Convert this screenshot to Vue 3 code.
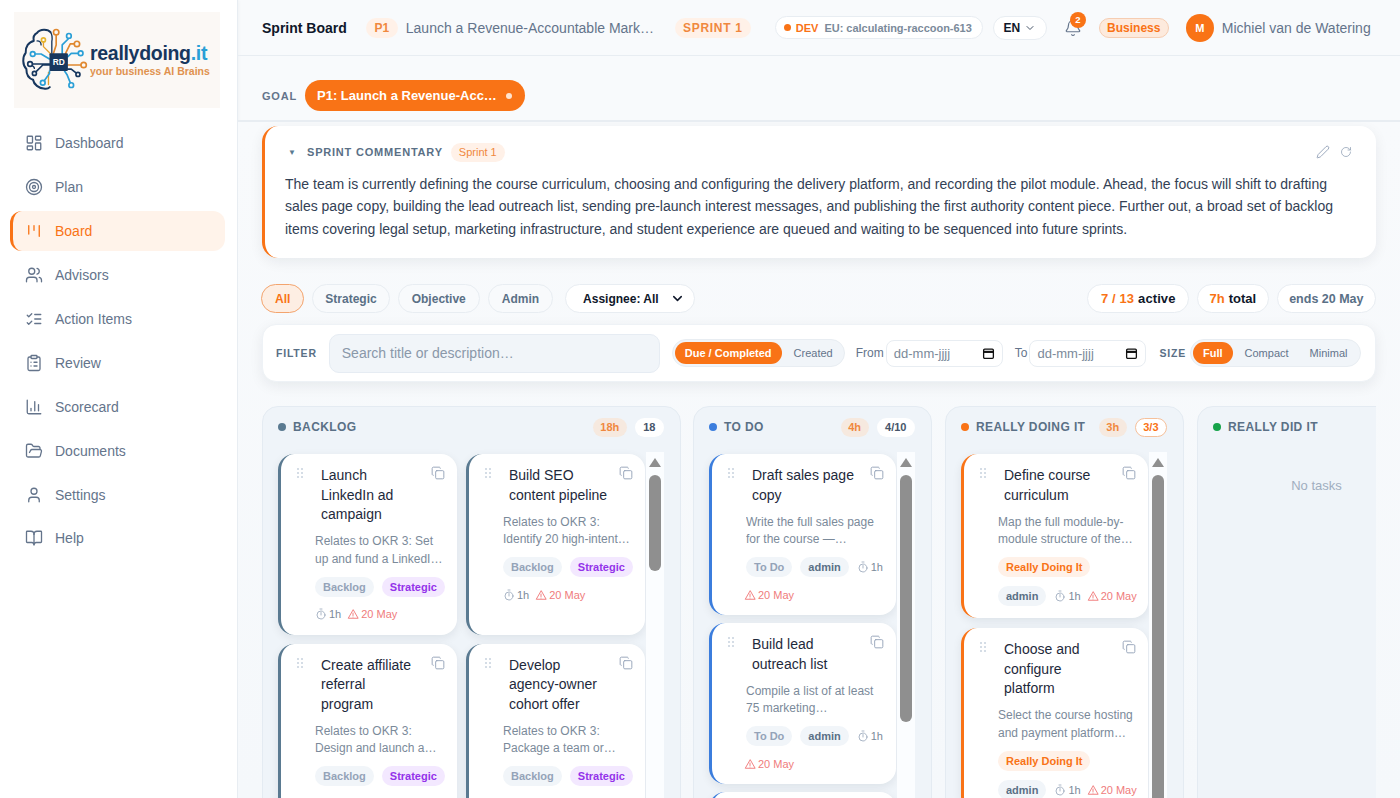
<template>
  <div class="app">
    <aside class="sidebar">
      <div class="logo">
        <svg class="logo__mark" viewBox="60 80 200 190" fill="none" stroke-linecap="round" stroke-linejoin="round">
          <path d="M148 92c-6-8-30-12-40 2-8 4-12 14-10 24-14 2-26 18-24 36-10 12-10 36 2 48 0 14 6 28 20 32 2 14 18 26 32 26 8 2 14 0 18-4" stroke="#17375e" stroke-width="6" />
          <path d="M148 92c6 8 6 16 4 28l0 35M108 118c8 0 12 6 12 12M90 190c6 2 10 6 10 10" stroke="#17375e" stroke-width="4" />
          <path d="M165 100v30l-8 25M227 127h-20l-14 28M247 190h-47" stroke="#e0882f" stroke-width="5" />
          <path d="M127 121v14l22 22M142 212v36" stroke="#e5a02e" stroke-width="4" />
          <path d="M203 110l-20 20v25M238 155h-28l-10 10M125 243l20-28v-7M95 157h25l25 15M210 250l-12-30-8-12" stroke="#2a9fd6" stroke-width="5" />
          <path d="M87 187h58M100 215l25-25h20M230 218l-20-16h-10" stroke="#17375e" stroke-width="5" />
          <g stroke-width="5" fill="#fbf8f5">
            <circle cx="165" cy="92" r="8" stroke="#e0882f" />
            <circle cx="203" cy="103" r="7" stroke="#2a9fd6" />
            <circle cx="227" cy="127" r="8" stroke="#e0882f" />
            <circle cx="238" cy="155" r="7" stroke="#2a9fd6" />
            <circle cx="247" cy="190" r="8" stroke="#e0882f" />
            <circle cx="230" cy="218" r="6" stroke="#17375e" />
            <circle cx="210" cy="250" r="7" stroke="#2a9fd6" />
            <circle cx="125" cy="243" r="7" stroke="#2a9fd6" />
            <circle cx="100" cy="215" r="6" stroke="#17375e" />
            <circle cx="87" cy="187" r="7" stroke="#17375e" />
            <circle cx="95" cy="157" r="7" stroke="#2a9fd6" />
            <circle cx="127" cy="115" r="6" stroke="#e5b32e" />
          </g>
          <rect x="145" y="155" width="55" height="53" rx="3" fill="#17375e" />
          <text x="172.5" y="190" text-anchor="middle" fill="#fff" font-size="25" font-weight="700" font-family="'Liberation Sans', sans-serif">RD</text>
        </svg>
        <div class="logo__text">
          <div class="logo__name">reallydoing<span>.it</span></div>
          <div class="logo__tag">your business AI Brains</div>
        </div>
      </div>

      <nav class="nav">
        <a v-for="item in navItems" :key="item.label" class="nav__item" :class="{ 'nav__item--active': item.active }">
          <svg class="nav__icon" viewBox="0 0 24 24" fill="none" stroke="currentColor" stroke-width="1.75" stroke-linecap="round" stroke-linejoin="round">
            <path v-for="d in item.paths" :key="d" :d="d" />
          </svg>
          <span>{{ item.label }}</span>
        </a>
      </nav>
    </aside>

    <main class="main">
      <header class="topbar">
        <strong class="topbar__title">Sprint Board</strong>
        <span class="tint-chip tint-chip--p">P1</span>
        <span class="topbar__goal">Launch a Revenue-Accountable Mark…</span>
        <span class="tint-chip tint-chip--sprint">SPRINT 1</span>
        <div class="env">
          <i class="env__dot"></i>
          <b>DEV</b>
          <span>EU: calculating-raccoon-613</span>
        </div>
        <div class="lang">
          EN
          <svg viewBox="0 0 24 24" width="12" height="12" fill="none" stroke="#475569" stroke-width="2" stroke-linecap="round" stroke-linejoin="round"><path d="m6 9 6 6 6-6" /></svg>
        </div>
        <div class="bell">
          <svg viewBox="0 0 24 24" width="18" height="18" fill="none" stroke="#64748b" stroke-width="1.6" stroke-linecap="round" stroke-linejoin="round">
            <path d="M10.27 21a2 2 0 0 0 3.46 0" />
            <path d="M3.26 15.33A1 1 0 0 0 4 17h16a1 1 0 0 0 .74-1.67C19.41 13.96 18 12.5 18 8A6 6 0 0 0 6 8c0 4.5-1.41 5.96-2.74 7.33" />
          </svg>
          <span class="bell__count">2</span>
        </div>
        <span class="plan">Business</span>
        <div class="user">
          <span class="user__avatar">M</span>
          <span class="user__name">Michiel van de Watering</span>
        </div>
      </header>

      <div class="goalbar">
        <span class="goalbar__label">GOAL</span>
        <button class="goalbar__pill">
          <span>P1: Launch a Revenue-Acc…</span>
          <i></i>
        </button>
      </div>

      <div class="content">
        <section class="commentary">
          <div class="commentary__head">
            <span class="commentary__caret">▼</span>
            <span class="commentary__title">SPRINT COMMENTARY</span>
            <span class="commentary__chip">Sprint 1</span>
            <div class="commentary__tools">
              <svg viewBox="0 0 24 24" width="14" height="14" fill="none" stroke="#94a3b8" stroke-width="1.6" stroke-linecap="round" stroke-linejoin="round"><path d="M21.174 6.812a1 1 0 0 0-3.986-3.987L3.842 16.174a2 2 0 0 0-.5.83l-1.321 4.352a.5.5 0 0 0 .623.622l4.353-1.32a2 2 0 0 0 .83-.497z" /></svg>
              <svg viewBox="0 0 24 24" width="12" height="12" fill="none" stroke="#94a3b8" stroke-width="1.6" stroke-linecap="round" stroke-linejoin="round"><path d="M21 12a9 9 0 1 1-9-9c2.52 0 4.93 1 6.74 2.74L21 8" /><path d="M21 3v5h-5" /></svg>
            </div>
          </div>
          <p class="commentary__text">The team is currently defining the course curriculum, choosing and configuring the delivery platform, and recording the pilot module. Ahead, the focus will shift to drafting sales page copy, building the lead outreach list, sending pre-launch interest messages, and publishing the first authority content piece. Further out, a broad set of backlog items covering legal setup, marketing infrastructure, and student experience are queued and waiting to be sequenced into future sprints.</p>
        </section>

        <div class="toolbar">
          <span v-for="(tab, i) in tabs" :key="tab" class="tab" :class="{ 'tab--active': i === 0 }">{{ tab }}</span>
          <div class="assignee">
            <span>Assignee: All</span>
            <svg viewBox="0 0 24 24" width="15" height="15" fill="none" stroke="#0f172a" stroke-width="2.4" stroke-linecap="round" stroke-linejoin="round"><path d="m6 9 6 6 6-6" /></svg>
          </div>
          <div class="stats">
            <span class="stat stat--first"><em>7 / 13</em> active</span>
            <span class="stat"><em>7h</em> total</span>
            <span class="stat stat--muted">ends 20 May</span>
          </div>
        </div>

        <div class="filter">
          <span class="filter__label">FILTER</span>
          <div class="filter__search">Search title or description…</div>
          <div class="seg seg--date">
            <span class="seg__on">Due / Completed</span>
            <span class="seg__off">Created</span>
          </div>
          <div class="date-field">
            <label>From</label>
            <div class="date-input">
              <span>dd-mm-jjjj</span>
              <svg viewBox="0 0 24 24" width="13" height="13" fill="none" stroke="#111" stroke-width="2.4"><rect x="3" y="4" width="18" height="17" rx="2" /><path d="M3 9h18" stroke-width="4" /></svg>
            </div>
          </div>
          <div class="date-field date-field--to">
            <label>To</label>
            <div class="date-input">
              <span>dd-mm-jjjj</span>
              <svg viewBox="0 0 24 24" width="13" height="13" fill="none" stroke="#111" stroke-width="2.4"><rect x="3" y="4" width="18" height="17" rx="2" /><path d="M3 9h18" stroke-width="4" /></svg>
            </div>
          </div>
          <span class="filter__label filter__label--size">SIZE</span>
          <div class="seg seg--size">
            <span class="seg__on">Full</span>
            <span class="seg__off">Compact</span>
            <span class="seg__off">Minimal</span>
          </div>
        </div>

        <div class="board">
          <section v-for="col in columns" :key="col.name" class="column" :class="`column--${col.kind}`" :style="{ '--accent': col.color }">
            <div class="column__head">
              <i class="column__dot"></i>
              <span class="column__name">{{ col.name }}</span>
              <span v-if="col.hours" class="column__hours">{{ col.hours }}</span>
              <span v-if="col.count" class="column__count" :class="{ 'column__count--full': col.full }">{{ col.count }}</span>
            </div>

            <p v-if="!col.cards.length" class="column__empty">No tasks</p>

            <div v-else class="column__body">
              <div class="column__cards">
                <article v-for="card in col.cards" :key="card.title" class="card">
                  <span class="card__grip"></span>
                  <svg class="card__copy" viewBox="0 0 24 24" fill="none" stroke="#94a3b8" stroke-width="1.6" stroke-linecap="round" stroke-linejoin="round">
                    <rect x="8" y="8" width="14" height="14" rx="2" />
                    <path d="M4 16c-1.1 0-2-.9-2-2V4c0-1.1.9-2 2-2h10c1.1 0 2 .9 2 2" />
                  </svg>
                  <h4 class="card__title">{{ card.title }}</h4>
                  <p class="card__desc">{{ card.desc }}</p>
                  <div class="card__meta">
                    <span class="chip" :class="`chip--${col.kind}`">{{ col.status }}</span>
                    <span v-if="card.tag === 'Strategic'" class="chip chip--strategic">Strategic</span>
                    <span v-else class="chip chip--admin">admin</span>
                    <span class="info">
                      <svg viewBox="0 0 24 24" width="12" height="12" fill="none" stroke="#94a3b8" stroke-width="1.6" stroke-linecap="round"><circle cx="12" cy="14" r="8" /><path d="M12 14V9M10 2h4" /></svg>
                      1h
                    </span>
                    <span class="info info--late">
                      <svg viewBox="0 0 24 24" width="12" height="12" fill="none" stroke="#ef6b6b" stroke-width="1.7" stroke-linejoin="round" stroke-linecap="round"><path d="M12 4 2.5 20.5h19z" /><path d="M12 10v5M12 18v.01" /></svg>
                      20 May
                    </span>
                  </div>
                </article>
              </div>
              <div class="scroll">
                <span class="scroll__up"></span>
                <span class="scroll__thumb" :style="{ height: col.thumb + 'px' }"></span>
              </div>
            </div>
          </section>
        </div>
      </div>
    </main>
  </div>
</template>

<script setup>
const navItems = [
  { label: 'Dashboard', paths: ['M4 3h5a1 1 0 0 1 1 1v7a1 1 0 0 1-1 1H4a1 1 0 0 1-1-1V4a1 1 0 0 1 1-1z', 'M15 3h5a1 1 0 0 1 1 1v3a1 1 0 0 1-1 1h-5a1 1 0 0 1-1-1V4a1 1 0 0 1 1-1z', 'M15 12h5a1 1 0 0 1 1 1v7a1 1 0 0 1-1 1h-5a1 1 0 0 1-1-1v-7a1 1 0 0 1 1-1z', 'M4 16h5a1 1 0 0 1 1 1v3a1 1 0 0 1-1 1H4a1 1 0 0 1-1-1v-3a1 1 0 0 1 1-1z'] },
  { label: 'Plan', paths: ['M12 2a10 10 0 1 0 0 20 10 10 0 1 0 0-20z', 'M12 6a6 6 0 1 0 0 12 6 6 0 1 0 0-12z', 'M12 10a2 2 0 1 0 0 4 2 2 0 1 0 0-4z'] },
  { label: 'Board', active: true, paths: ['M5 5v11', 'M12 5v6', 'M19 5v14'] },
  { label: 'Advisors', paths: ['M16 21v-2a4 4 0 0 0-4-4H6a4 4 0 0 0-4 4v2', 'M9 3a4 4 0 1 0 0 8 4 4 0 1 0 0-8z', 'M22 21v-2a4 4 0 0 0-3-3.87', 'M16 3.13a4 4 0 0 1 0 7.75'] },
  { label: 'Action Items', paths: ['m3 17 2 2 4-4', 'm3 7 2 2 4-4', 'M13 6h8', 'M13 12h8', 'M13 18h8'] },
  { label: 'Review', paths: ['M9 2h6a1 1 0 0 1 1 1v2a1 1 0 0 1-1 1H9a1 1 0 0 1-1-1V3a1 1 0 0 1 1-1z', 'M16 4h2a2 2 0 0 1 2 2v14a2 2 0 0 1-2 2H6a2 2 0 0 1-2-2V6a2 2 0 0 1 2-2h2', 'M12 11h4', 'M12 16h4', 'M8 11h.01', 'M8 16h.01'] },
  { label: 'Scorecard', paths: ['M3 3v16a2 2 0 0 0 2 2h16', 'M18 17V9', 'M13 17V5', 'M8 17v-3'] },
  { label: 'Documents', paths: ['m6 14 1.5-2.9A2 2 0 0 1 9.24 10H20a2 2 0 0 1 1.94 2.5l-1.54 6a2 2 0 0 1-1.94 1.5H4a2 2 0 0 1-2-2V5a2 2 0 0 1 2-2h3.9a2 2 0 0 1 1.69.9l.81 1.2a2 2 0 0 0 1.67.9H18a2 2 0 0 1 2 2v2'] },
  { label: 'Settings', paths: ['M19 21v-2a4 4 0 0 0-4-4H9a4 4 0 0 0-4 4v2', 'M12 3a4 4 0 1 0 0 8 4 4 0 1 0 0-8z'] },
  { label: 'Help', paths: ['M12 7v14', 'M3 18a1 1 0 0 1-1-1V4a1 1 0 0 1 1-1h5a4 4 0 0 1 4 4 4 4 0 0 1 4-4h5a1 1 0 0 1 1 1v13a1 1 0 0 1-1 1h-6a3 3 0 0 0-3 3 3 3 0 0 0-3-3z'] },
]

const tabs = ['All', 'Strategic', 'Objective', 'Admin']

const columns = [
  {
    name: 'BACKLOG', kind: 'backlog', status: 'Backlog', color: '#5a7a91', hours: '18h', count: '18', thumb: 96,
    cards: [
      { title: 'Launch LinkedIn ad campaign', desc: 'Relates to OKR 3: Set up and fund a LinkedIn ad campaign aimed at agency owners', tag: 'Strategic' },
      { title: 'Build SEO content pipeline', desc: 'Relates to OKR 3: Identify 20 high-intent keywords and plan the content around them', tag: 'Strategic' },
      { title: 'Create affiliate\nreferral\nprogram', desc: 'Relates to OKR 3: Design and launch a referral program for past students', tag: 'Strategic' },
      { title: 'Develop agency-owner cohort offer', desc: 'Relates to OKR 3: Package a team or agency cohort offer for larger buyers', tag: 'Strategic' },
    ],
  },
  {
    name: 'TO DO', kind: 'todo', status: 'To Do', color: '#3b7ddd', hours: '4h', count: '4/10', thumb: 247,
    cards: [
      { title: 'Draft sales page copy', desc: 'Write the full sales page for the course — headline,\u00a0offer,\u00a0and guarantee', tag: 'admin' },
      { title: 'Build lead outreach list', desc: 'Compile a list of at least 75 marketing professionals to contact directly', tag: 'admin' },
      { title: 'Send pre-launch messages', desc: 'Send interest messages to everyone on the lead outreach list', tag: 'admin' },
    ],
  },
  {
    name: 'REALLY DOING IT', kind: 'doing', status: 'Really Doing It', color: '#f97316', hours: '3h', count: '3/3', full: true, thumb: 330,
    cards: [
      { title: 'Define course curriculum', desc: 'Map the full module-by-module structure of the course and its lessons', tag: 'admin' },
      { title: 'Choose and configure platform', desc: 'Select the course hosting and payment platform configuration', tag: 'admin' },
    ],
  },
  { name: 'REALLY DID IT', kind: 'did', status: 'Really Did It', color: '#16a34a', cards: [] },
]
</script>

<style>
html,
body {
  margin: 0;
  height: 100%;
  overflow: hidden;
}
</style>

<style scoped>
* {
  box-sizing: border-box;
}

.app {
  display: flex;
  height: 100vh;
  overflow: hidden;
  background: #f8fafc;
  color: #0f172a;
  font-family: "Liberation Sans", Arial, sans-serif;
}

.sidebar {
  width: 238px;
  flex: none;
  background: #fff;
  border-right: 1px solid #e8edf2;
  box-shadow: 1px 0 3px rgba(15, 23, 42, 0.03);
}

.logo {
  margin: 12px 17px 15.5px 14px;
  height: 96px;
  display: flex;
  align-items: center;
  gap: 2px;
  padding-left: 7px;
  background: #fbf8f5;
}

.logo__mark {
  width: 67px;
  height: 64px;
  flex: none;
}

.logo__name {
  color: #17375e;
  font-size: 19.5px;
  font-weight: 700;
  letter-spacing: -0.3px;
  line-height: 22px;
}

.logo__name span {
  color: #2a9fd6;
}

.logo__tag {
  color: #e0924f;
  font-size: 10.5px;
  font-weight: 700;
  line-height: 14px;
  white-space: nowrap;
}

.nav {
  display: flex;
  flex-direction: column;
  gap: 4px;
  margin: 0 12px 0 10px;
}

.nav__item {
  height: 39.9px;
  display: flex;
  align-items: center;
  gap: 12px;
  padding-left: 12px;
  border-left: 3px solid transparent;
  border-radius: 12px;
  color: #64748b;
  font-size: 14px;
}

.nav__item--active {
  background: #fff3ea;
  border-left-color: #f97316;
  color: #f97316;
}

.nav__icon {
  width: 18px;
  height: 18px;
  flex: none;
}

.main {
  flex: 1;
  min-width: 0;
  display: flex;
  flex-direction: column;
}

.topbar {
  height: 56px;
  flex: none;
  display: flex;
  align-items: center;
  padding: 0 0 0 24px;
  border-bottom: 1px solid #e8edf2;
}

.topbar > * {
  flex: none;
}

.topbar__title {
  font-size: 14px;
  margin-right: 19px;
  white-space: nowrap;
}

.tint-chip {
  height: 20px;
  display: inline-flex;
  align-items: center;
  padding: 0 8px;
  border-radius: 10px;
  background: #fff1e8;
  color: #f0883e;
  font-size: 12px;
  font-weight: 700;
}

.tint-chip--p {
  width: 32px;
  justify-content: center;
  margin-right: 8px;
}

.tint-chip--sprint {
  width: 76px;
  justify-content: center;
  padding: 0;
  letter-spacing: 0.7px;
  margin-right: 24px;
}

.topbar__goal {
  width: 248px;
  margin-right: 21px;
  color: #64748b;
  font-size: 14px;
  white-space: nowrap;
}

.env {
  width: 208px;
  height: 23px;
  display: flex;
  align-items: center;
  padding-left: 8px;
  background: #fff;
  border: 1px solid #e8edf2;
  border-radius: 12px;
  font-size: 11px;
  font-weight: 700;
  margin-right: 10px;
  white-space: nowrap;
}

.env__dot {
  width: 7px;
  height: 7px;
  border-radius: 50%;
  background: #f97316;
  margin-right: 5px;
}

.env b {
  color: #f97316;
  margin-right: 6px;
}

.env span {
  color: #7b8a9a;
  font-size: 11px;
  letter-spacing: -0.02px;
}

.lang {
  width: 54px;
  height: 24px;
  display: flex;
  align-items: center;
  justify-content: center;
  gap: 4px;
  background: #fff;
  border: 1px solid #e8edf2;
  border-radius: 12px;
  font-size: 12px;
  font-weight: 700;
  margin-right: 17px;
}

.bell {
  position: relative;
  width: 18px;
  height: 18px;
  margin-right: 17px;
}

.bell__count {
  position: absolute;
  top: -7px;
  left: 6px;
  width: 16px;
  height: 16px;
  border-radius: 50%;
  background: #f97316;
  color: #fff;
  font-size: 9.5px;
  font-weight: 700;
  line-height: 16px;
  text-align: center;
}

.plan {
  width: 70px;
  height: 20px;
  display: flex;
  align-items: center;
  justify-content: center;
  background: #fdeadd;
  border: 1px solid #f6cdb2;
  border-radius: 10px;
  color: #f97316;
  font-size: 12px;
  font-weight: 700;
  margin-right: 17px;
}

.user {
  display: flex;
  align-items: center;
  gap: 8px;
  white-space: nowrap;
}

.user__avatar {
  width: 28px;
  height: 28px;
  border-radius: 50%;
  background: #f97316;
  color: #fff;
  font-size: 11px;
  font-weight: 700;
  line-height: 28px;
  text-align: center;
}

.user__name {
  color: #64748b;
  font-size: 14px;
}

.goalbar {
  height: 66px;
  flex: none;
  display: flex;
  align-items: center;
  gap: 8px;
  padding: 15px 24px 0;
  border-bottom: 2px solid #e8edf2;
}

.goalbar__label {
  color: #64748b;
  font-size: 11px;
  font-weight: 700;
  letter-spacing: 0.8px;
}

.goalbar__pill {
  width: 220px;
  height: 31px;
  display: flex;
  align-items: center;
  justify-content: space-between;
  padding: 0 13px 0 12px;
  border: 0;
  border-radius: 16px;
  background: #f97316;
  color: #fff;
  font: 700 13px "Liberation Sans", Arial, sans-serif;
}

.goalbar__pill i {
  width: 6px;
  height: 6px;
  border-radius: 50%;
  background: #ffe3cf;
}

.content {
  flex: 1;
  min-height: 0;
  overflow: hidden;
  padding: 4px 24px 0;
  background: linear-gradient(#f8fafc, #f5f8fb);
}

.commentary {
  height: 132px;
  padding: 16px 24px 0 20px;
  background: #fff;
  border-left: 3px solid #f97316;
  border-radius: 16px;
  box-shadow: 0 4px 14px rgba(15, 23, 42, 0.07);
}

.commentary__head {
  height: 20px;
  display: flex;
  align-items: center;
}

.commentary__caret {
  width: 22px;
  padding-left: 3px;
  color: #5a7a91;
  font-size: 8px;
}

.commentary__title {
  color: #5a7086;
  font-size: 11px;
  font-weight: 700;
  letter-spacing: 0.8px;
  margin-right: 8px;
}

.commentary__chip {
  height: 19px;
  padding: 0 8px;
  border-radius: 10px;
  background: #fff1e8;
  color: #f0883e;
  font-size: 11px;
  line-height: 19px;
}

.commentary__tools {
  margin-left: auto;
  display: flex;
  align-items: center;
  gap: 10px;
}

.commentary__text {
  margin: 11px 0 0;
  color: #334155;
  font-size: 14px;
  line-height: 22.4px;
}

.toolbar {
  height: 29px;
  display: flex;
  align-items: center;
  gap: 8px;
  margin: 26px 0 0 -1px;
}

.tab {
  height: 29px;
  display: flex;
  align-items: center;
  padding: 0 13px;
  border: 1px solid #e8edf2;
  border-radius: 15px;
  background: #f8fafc;
  color: #5a7086;
  font-size: 12px;
  font-weight: 700;
}

.tab:nth-child(2) {
  padding: 0 12px;
}

.tab--active {
  background: #fdeee3;
  border-color: #f3a46e;
  color: #f97316;
}

.assignee {
  width: 130px;
  height: 29px;
  display: flex;
  align-items: center;
  justify-content: space-between;
  margin-left: 4px;
  padding: 0 9px 0 17px;
  background: #fff;
  border: 1px solid #e8edf2;
  border-radius: 15px;
  font-size: 12px;
  font-weight: 700;
}

.stats {
  margin-left: auto;
  display: flex;
  gap: 8px;
}

.stat {
  height: 29px;
  display: flex;
  align-items: center;
  gap: 4px;
  padding: 0 11.5px;
  background: #fff;
  border: 1px solid #e8edf2;
  border-radius: 15px;
  font-size: 13px;
  font-weight: 700;
  white-space: nowrap;
}

.stat em {
  color: #f97316;
  font-style: normal;
}

.stat--first {
  padding: 0 12.5px;
  letter-spacing: 0.1px;
}

.stat--muted {
  color: #5a7086;
  font-size: 12.5px;
}

.filter {
  height: 58px;
  display: flex;
  align-items: center;
  margin-top: 11px;
  padding: 0 13px;
  background: #fff;
  border: 1px solid #eef2f6;
  border-radius: 14px;
  box-shadow: 0 4px 14px rgba(15, 23, 42, 0.07);
}

.filter > * {
  flex: none;
}

.filter__label {
  color: #5a7086;
  font-size: 10.5px;
  font-weight: 700;
  letter-spacing: 0.8px;
}

.filter__search {
  width: 331px;
  height: 39px;
  display: flex;
  align-items: center;
  margin: 0 12px 0 12px;
  padding-left: 12px;
  background: #f1f5f9;
  border: 1px solid #e6ecf3;
  border-radius: 10px;
  color: #8a98a9;
  font-size: 14px;
}

.seg {
  height: 28px;
  display: flex;
  align-items: center;
  padding: 0 2px;
  background: #f1f5f9;
  border: 1px solid #e8edf2;
  border-radius: 14px;
  font-size: 11px;
}

.seg--date {
  width: 173px;
}

.seg--size {
  width: 171px;
  margin-left: 4px;
}

.seg__on {
  height: 22px;
  display: flex;
  align-items: center;
  justify-content: center;
  padding: 0 10px;
  border-radius: 11px;
  background: #f97316;
  color: #fff;
  font-weight: 700;
}

.seg__off {
  margin-left: 12px;
  color: #64748b;
}

.seg--size .seg__off + .seg__off {
  margin-left: 21px;
}

.date-field {
  display: flex;
  align-items: center;
  gap: 2px;
  margin-left: 11px;
}

.date-field--to {
  margin-left: 12px;
}

.date-field label {
  color: #64748b;
  font-size: 12px;
}

.date-input {
  width: 117px;
  height: 27px;
  display: flex;
  align-items: center;
  justify-content: space-between;
  padding: 0 7px;
  background: #fff;
  border: 1px solid #e8edf2;
  border-radius: 8px;
  color: #7b8a9a;
  font-size: 13px;
}

.filter__label--size {
  margin-left: 13px;
}

.board {
  display: flex;
  align-items: flex-start;
  gap: 13px;
  margin-top: 24px;
  overflow: hidden;
  height: 392px;
}

.column {
  flex: none;
  width: 239px;
  height: 420px;
  padding: 0 0 0 15px;
  background: #eff4f9;
  border: 1px solid #e4ebf2;
  border-radius: 16px;
}

.column--backlog {
  width: 419px;
  margin-right: -1px;
}

.column__head {
  height: 47px;
  display: flex;
  align-items: center;
  padding: 0 16px 7px 0;
}

.column__dot {
  width: 8px;
  height: 8px;
  flex: none;
  margin: 0 7px 0 0;
  border-radius: 50%;
  background: var(--accent);
}

.column__name {
  flex: 1;
  color: #5a7086;
  font-size: 12px;
  font-weight: 700;
  letter-spacing: 0.4px;
  white-space: nowrap;
}

.column__hours {
  height: 19px;
  padding: 0 7.5px;
  border-radius: 10px;
  background: #f6e9df;
  color: #f0883e;
  font-size: 11px;
  font-weight: 700;
  line-height: 19px;
}

.column__count {
  height: 19px;
  margin-left: 8px;
  padding: 0 8.5px;
  background: #fff;
  border-radius: 10px;
  color: #475569;
  font-size: 11px;
  font-weight: 700;
  line-height: 19px;
}

.column__count--full {
  padding: 0 7.5px;
  border: 1px solid #f6c09a;
  color: #f97316;
  line-height: 17px;
}

.column__empty {
  margin: 24px 0 0 -15px;
  color: #a0aec0;
  font-size: 13px;
  text-align: center;
}

.column__body {
  display: flex;
  align-items: flex-start;
}

.column__cards {
  flex: 1;
  min-width: 0;
  display: grid;
  gap: 8px;
}

.column--doing .column__cards {
  gap: 10px;
}

.column--backlog .column__cards {
  grid-template-columns: 179px 179px;
  gap: 9px 9px;
}

.card {
  position: relative;
  padding: 12px 9px 12px 34px;
  background: #fff;
  border-left: 3px solid var(--accent);
  border-radius: 16px;
  box-shadow: 0 3px 10px rgba(15, 23, 42, 0.08);
}

.card__grip {
  position: absolute;
  top: 13px;
  left: 15px;
  width: 8px;
  height: 12px;
  background-image: radial-gradient(circle, #d5dde6 1px, transparent 1.2px);
  background-size: 4px 4px;
}

.card__copy {
  position: absolute;
  top: 12px;
  right: 12px;
  width: 14px;
  height: 14px;
}

.card__title {
  margin: 0 0 8.5px;
  padding: 0 25px 0 6px;
  color: #1e293b;
  font-size: 14px;
  font-weight: 400;
  line-height: 19.5px;
  white-space: pre-line;
}

.card__desc {
  display: -webkit-box;
  -webkit-box-orient: vertical;
  -webkit-line-clamp: 2;
  overflow: hidden;
  margin: 0 0 8.5px;
  color: #7b8a9a;
  font-size: 12px;
  line-height: 17.6px;
}

.card__meta {
  display: flex;
  flex-wrap: wrap;
  align-items: center;
  gap: 9px 8px;
}

.chip {
  height: 20px;
  padding: 0 8px;
  border-radius: 10px;
  font-size: 11px;
  font-weight: 700;
  line-height: 20px;
  white-space: nowrap;
}

.chip--backlog,
.chip--todo {
  background: #f1f5f9;
  color: #94a3b8;
}

.chip--doing {
  background: #fff1e8;
  color: #f97316;
}

.chip--strategic {
  background: #f3e8ff;
  color: #9333ea;
}

.chip--admin {
  background: #f1f5f9;
  color: #5a7086;
}

.info {
  height: 17px;
  display: inline-flex;
  align-items: center;
  gap: 2px;
  color: #7b8a9a;
  font-size: 11px;
  white-space: nowrap;
}

.info--late {
  margin-left: -2px;
  color: #ef7c7c;
}

.scroll {
  position: relative;
  width: 18px;
  height: 350px;
  flex: none;
  margin: -2px 16px 0 1px;
  background: #fbfdff;
}

.scroll__up {
  position: absolute;
  top: 6px;
  left: 3px;
  border-left: 6px solid transparent;
  border-right: 6px solid transparent;
  border-bottom: 9px solid #8f8f8f;
}

.scroll__thumb {
  position: absolute;
  top: 23px;
  left: 3px;
  width: 12px;
  border-radius: 6px;
  background: #8f8f8f;
}
</style>
